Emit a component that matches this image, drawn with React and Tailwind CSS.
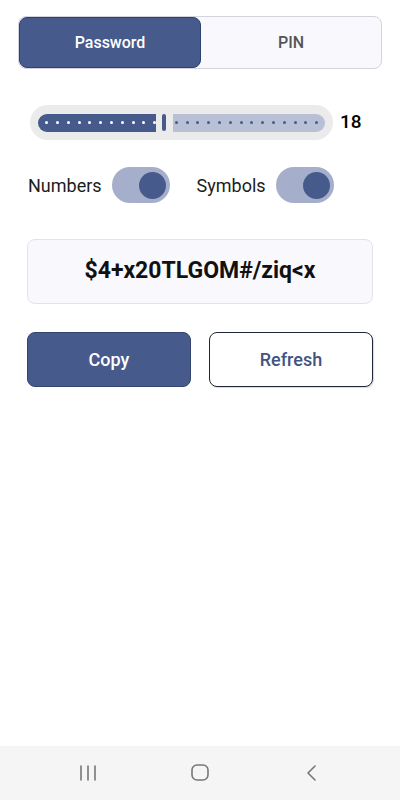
import React, { useState } from 'react';

const TICKS = 26;
const TICK_START = 15.2; // px from left edge of the slider pill
const TICK_STEP = 10.8;

const Toggle = ({ on, onChange }) => (
  <button
    onClick={() => onChange(!on)}
    className="relative flex h-[36px] w-[58px] items-center rounded-full bg-[#a5afcb] px-[4px]"
  >
    <span className={`h-[27px] w-[27px] rounded-full bg-[#465a8b] ${on ? 'ml-auto' : ''}`}></span>
  </button>
);

const App = () => {
  const [mode, setMode] = useState('password');
  const [length] = useState(18);
  const [numbers, setNumbers] = useState(true);
  const [symbols, setSymbols] = useState(true);

  return (
    <div
      className="flex h-[800px] w-[400px] flex-col bg-white"
      style={{ fontFamily: 'Roboto, "Noto Sans", sans-serif' }}
    >
      <div className="flex flex-1 flex-col">
        {/* MODE SWITCH */}
        <div className="mx-[18px] mt-[16px] flex h-[53px] rounded-[8px] border border-[#d4d4dc] bg-[#f8f8fd]">
          <button
            onClick={() => setMode('password')}
            className={`flex w-[182px] items-center justify-center rounded-[8px] text-[16px] font-medium ${mode === 'password' ? 'border border-[#2f4170] bg-[#465a8b] text-white' : 'text-[#555]'}`}
          >
            Password
          </button>
          <button
            onClick={() => setMode('pin')}
            className={`flex flex-1 items-center justify-center rounded-[8px] text-[16px] font-medium ${mode === 'pin' ? 'border border-[#2f4170] bg-[#465a8b] text-white' : 'text-[#555]'}`}
          >
            PIN
          </button>
        </div>

        {/* LENGTH SLIDER */}
        <div className="ml-[30px] mt-[36px] flex items-center gap-[7px]">
          <div className="relative flex h-[35px] w-[303px] items-center rounded-full bg-[#ebebeb] px-[8px]">
            <div className="h-[18px] w-[118px] rounded-l-full rounded-r-[3px] bg-[#465a8b]"></div>
            <div className="ml-[6px] mr-[7px] h-[17px] w-[4px] rounded-full bg-[#465a8b]"></div>
            <div className="h-[18px] flex-1 rounded-l-[3px] rounded-r-full bg-[#b7c0d5]"></div>
            {Array.from({ length: TICKS }).map((_, i) => {
              if (i === 11) return null;
              const left = TICK_START + i * TICK_STEP;
              return (
                <span
                  key={i}
                  className={`absolute top-[16px] h-[3px] w-[3px] rounded-full ${i < 11 ? 'bg-white' : 'bg-[#465a8b]'}`}
                  style={{ left: `${left}px` }}
                ></span>
              );
            })}
          </div>
          <span className="text-[19px] font-medium text-black">{length}</span>
        </div>

        {/* OPTIONS */}
        <div className="ml-[28px] mt-[27px] flex items-center">
          <span className="text-[18px] text-[#1c1c1c]">Numbers</span>
          <div className="ml-[10px]">
            <Toggle on={numbers} onChange={setNumbers} />
          </div>
          <span className="ml-[27px] text-[18px] text-[#1c1c1c]">Symbols</span>
          <div className="ml-[10px]">
            <Toggle on={symbols} onChange={setSymbols} />
          </div>
        </div>

        {/* RESULT */}
        <div className="mx-[27px] mt-[36px] flex h-[65px] items-center justify-center rounded-[8px] border border-[#e2e2ea] bg-[#f8f8fd]">
          <span className="text-[23px] font-bold text-[#111]">$4+x20TLGOM#/ziq&lt;x</span>
        </div>

        {/* ACTIONS */}
        <div className="mx-[27px] mt-[28px] flex gap-[18px]">
          <button className="flex h-[55px] flex-1 items-center justify-center rounded-[8px] border border-[#34466f] bg-[#465a8b] text-[18px] font-medium text-white">
            Copy
          </button>
          <button className="flex h-[55px] flex-1 items-center justify-center rounded-[8px] border border-[#1f2638] bg-white text-[18px] font-medium text-[#3f5483] shadow-[1px_1px_1px_rgba(0,0,0,0.15)]">
            Refresh
          </button>
        </div>
      </div>

      {/* SYSTEM NAV */}
      <div className="flex h-[54px] items-center justify-between bg-[#f5f5f5] px-[77px]">
        <svg width="22" height="22" viewBox="0 0 22 22" fill="none" stroke="#777" strokeWidth="1.6" strokeLinecap="round">
          <path d="M4 4v14M11 4v14M18 4v14" />
        </svg>
        <svg width="22" height="22" viewBox="0 0 22 22" fill="none" stroke="#777" strokeWidth="1.6">
          <rect x="3" y="3" width="16" height="15" rx="5" />
        </svg>
        <svg width="22" height="22" viewBox="0 0 22 22" fill="none" stroke="#777" strokeWidth="1.6" strokeLinecap="round" strokeLinejoin="round">
          <path d="M14 4l-7 7 7 7" />
        </svg>
      </div>
    </div>
  );
};

export default App;
